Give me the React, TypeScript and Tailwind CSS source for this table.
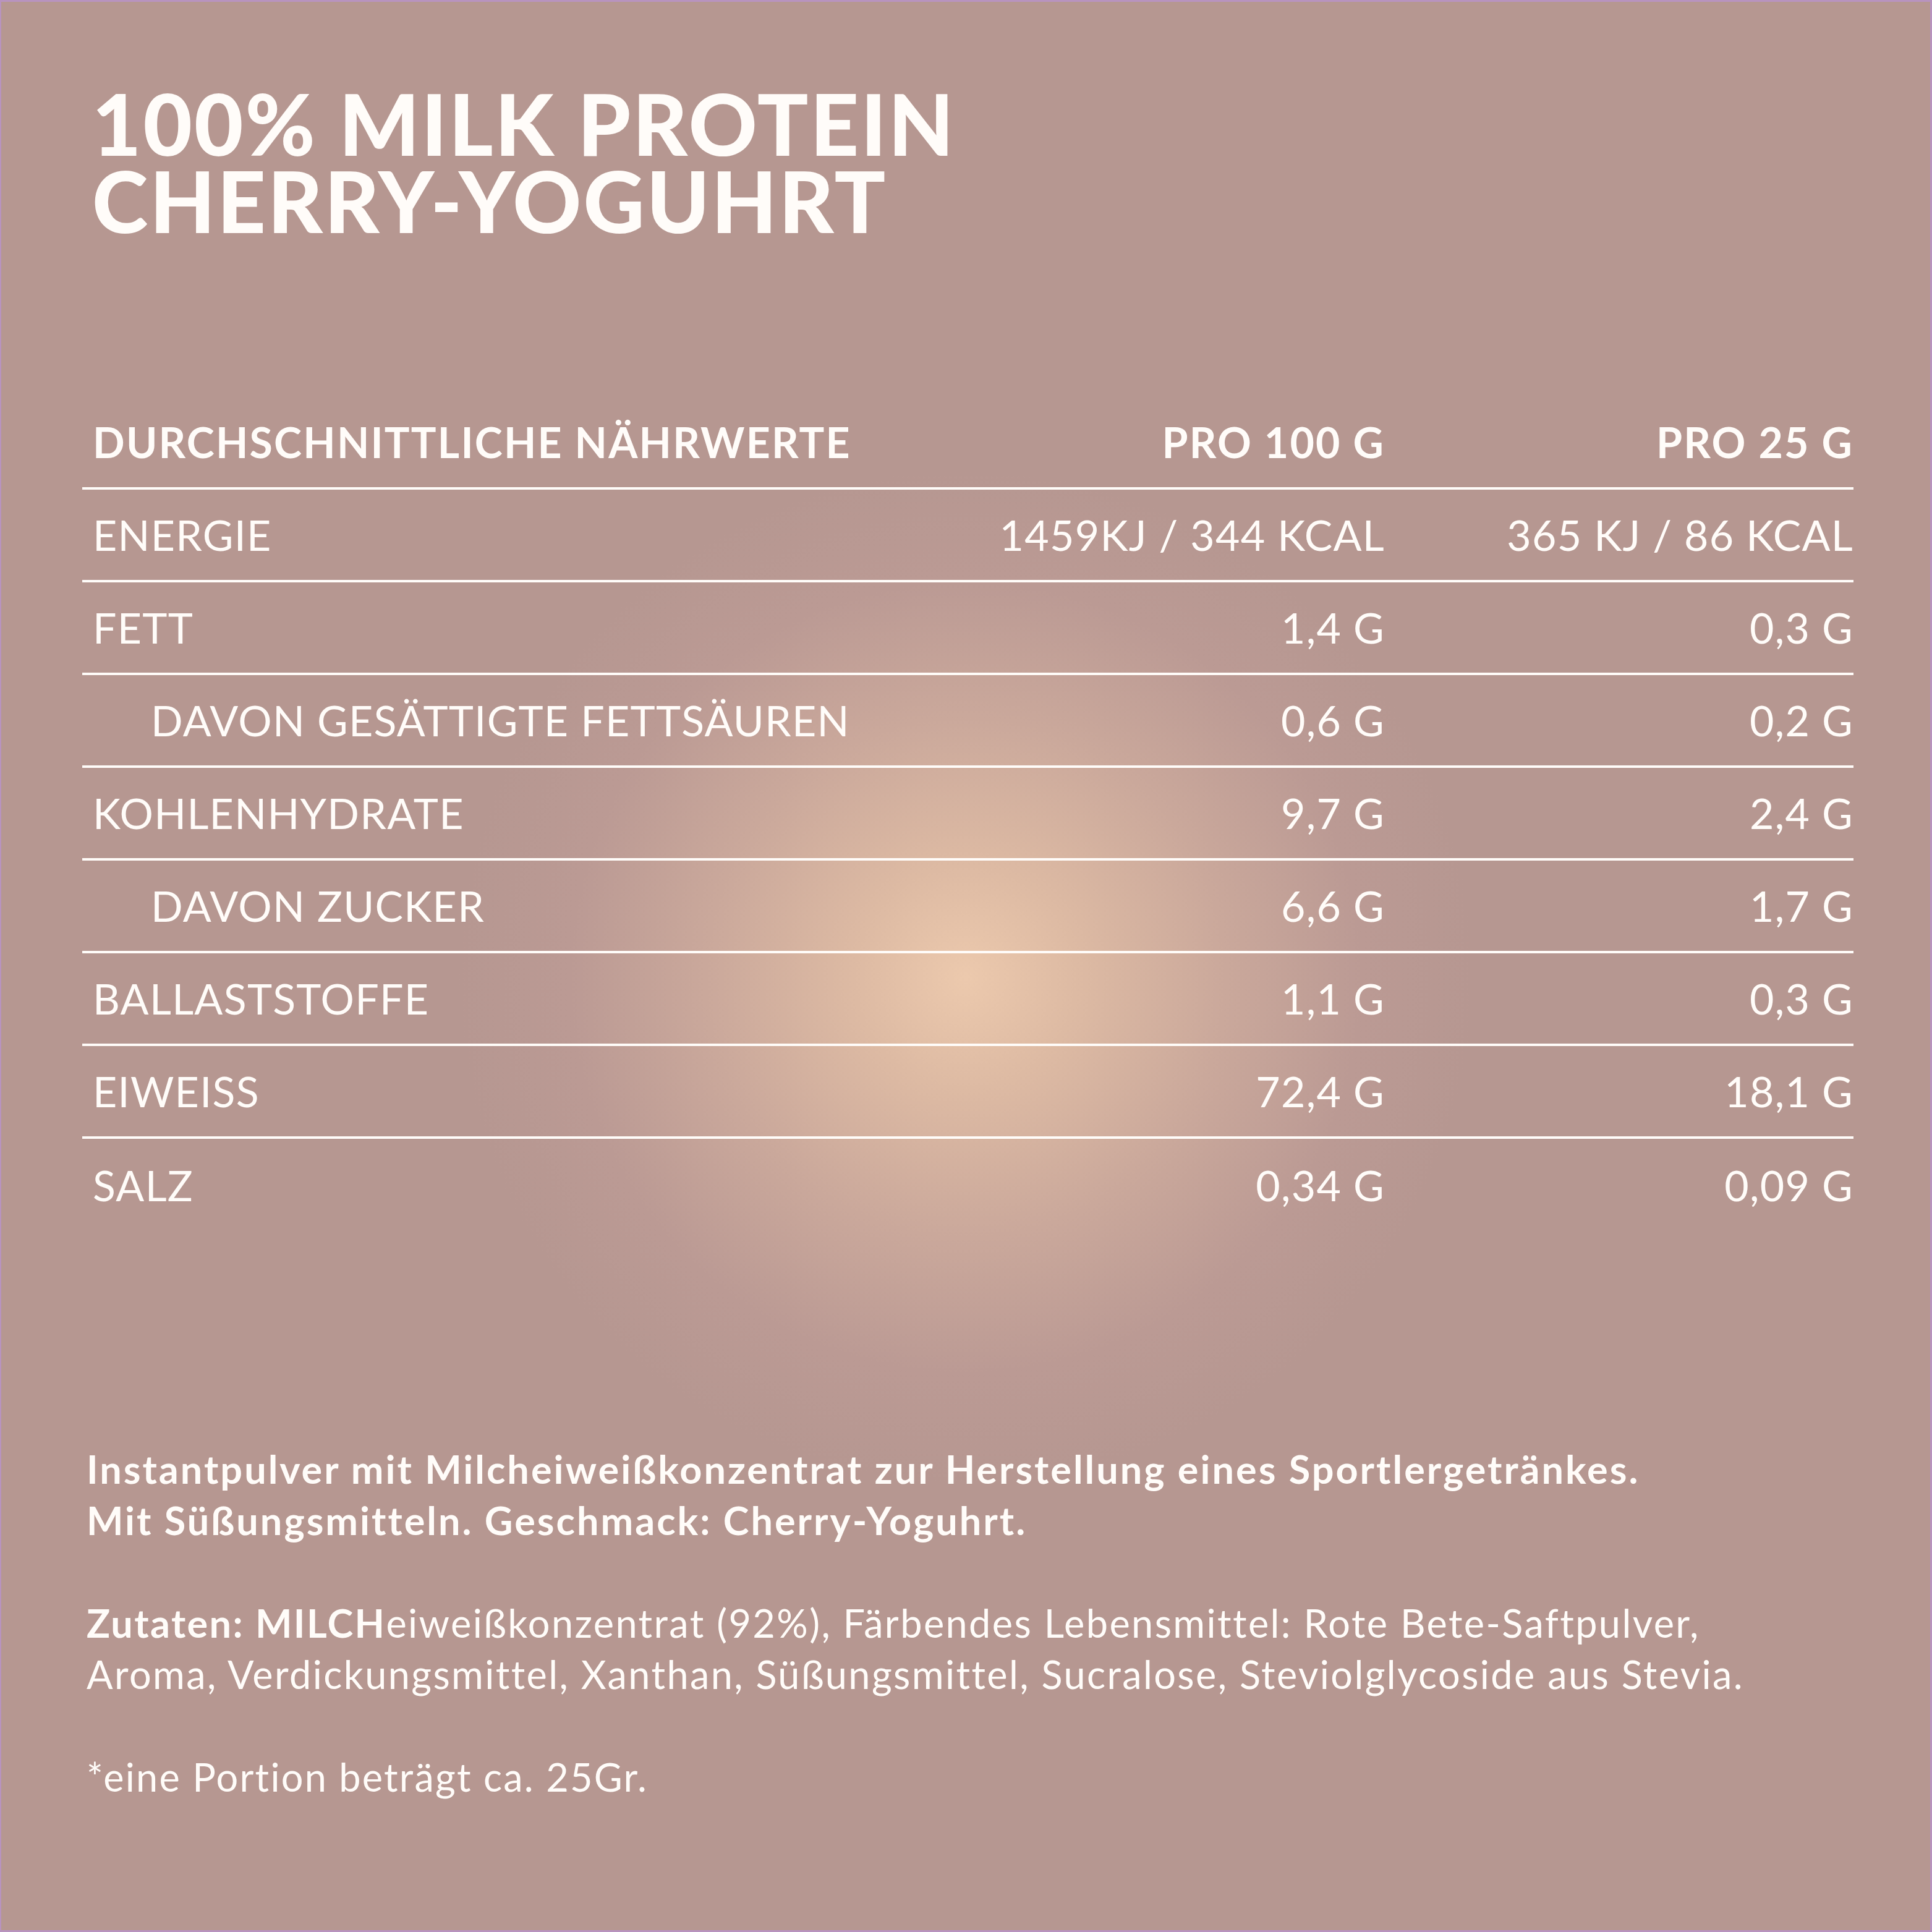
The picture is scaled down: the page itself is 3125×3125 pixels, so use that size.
const rows = [
  { label: "ENERGIE", a: "1459KJ / 344 KCAL", b: "365 KJ / 86 KCAL" },
  { label: "FETT", a: "1,4 G", b: "0,3 G" },
  { label: "DAVON GESÄTTIGTE FETTSÄUREN", a: "0,6 G", b: "0,2 G", sub: true },
  { label: "KOHLENHYDRATE", a: "9,7 G", b: "2,4 G" },
  { label: "DAVON ZUCKER", a: "6,6 G", b: "1,7 G", sub: true },
  { label: "BALLASTSTOFFE", a: "1,1 G", b: "0,3 G" },
  { label: "EIWEISS", a: "72,4 G", b: "18,1 G" },
  { label: "SALZ", a: "0,34 G", b: "0,09 G" },
];

export default function App() {
  return (
    <div
      className="w-[3125px] h-[3125px] flex flex-col border-t-[3px] border-r-[3px] border-b-[3px] border-l-[2px] border-[#b893bf] text-[#fffcf9] bg-[radial-gradient(circle_at_1560px_1578px,#ecc9ad_0px,#ddbaa3_180px,#caa89b_420px,#bb9a94_640px,#b69791_820px)]"
      style={{ fontFamily: "Lato, 'Liberation Sans', sans-serif" }}
    >
      <h1 className="pl-[147px] pt-[134px] text-[137px] leading-[125px] font-black tracking-[3px]">
        <div>100% MILK PROTEIN</div>
        <div>CHERRY-YOGUHRT</div>
      </h1>

      <div className="ml-[131px] mt-[255px] w-[2865px] flex flex-col text-[68px] tracking-[1.3px] whitespace-nowrap">
        <div className="h-[150px] flex items-center border-b-4 border-[#fffcf9] font-bold tracking-[2.2px]">
          <div className="flex-1 pl-[17px]">DURCHSCHNITTLICHE NÄHRWERTE</div>
          <div className="w-[700px] text-right">PRO 100 G</div>
          <div className="w-[758px] text-right">PRO 25 G</div>
        </div>
        {rows.map((r, i) => (
          <div
            key={r.label}
            className={
              "h-[150px] flex items-center " +
              (i < rows.length - 1 ? "border-b-4 border-[#fffcf9]" : "")
            }
          >
            <div className={"flex-1 " + (r.sub ? "pl-[111px]" : "pl-[17px]")}>{r.label}</div>
            <div className="w-[700px] text-right">{r.a}</div>
            <div className="w-[758px] text-right">{r.b}</div>
          </div>
        ))}
      </div>

      <div className="ml-[138px] mt-[342px] text-[63px] leading-[83px] tracking-[3px]">
        <p className="font-bold">
          Instantpulver mit Milcheiweißkonzentrat zur Herstellung eines Sportlergetränkes.
          <br />
          Mit Süßungsmitteln. Geschmack: Cherry-Yoguhrt.
        </p>
        <p className="mt-[83px] tracking-[2.4px]">
          <span className="font-bold">Zutaten: MILCH</span>eiweißkonzentrat (92%), Färbendes Lebensmittel: Rote Bete-Saftpulver,
          <br />
          Aroma, Verdickungsmittel, Xanthan, Süßungsmittel, Sucralose, Steviolglycoside aus Stevia.
        </p>
        <p className="mt-[83px] tracking-[2.2px]">*eine Portion beträgt ca. 25Gr.</p>
      </div>
    </div>
  );
}
